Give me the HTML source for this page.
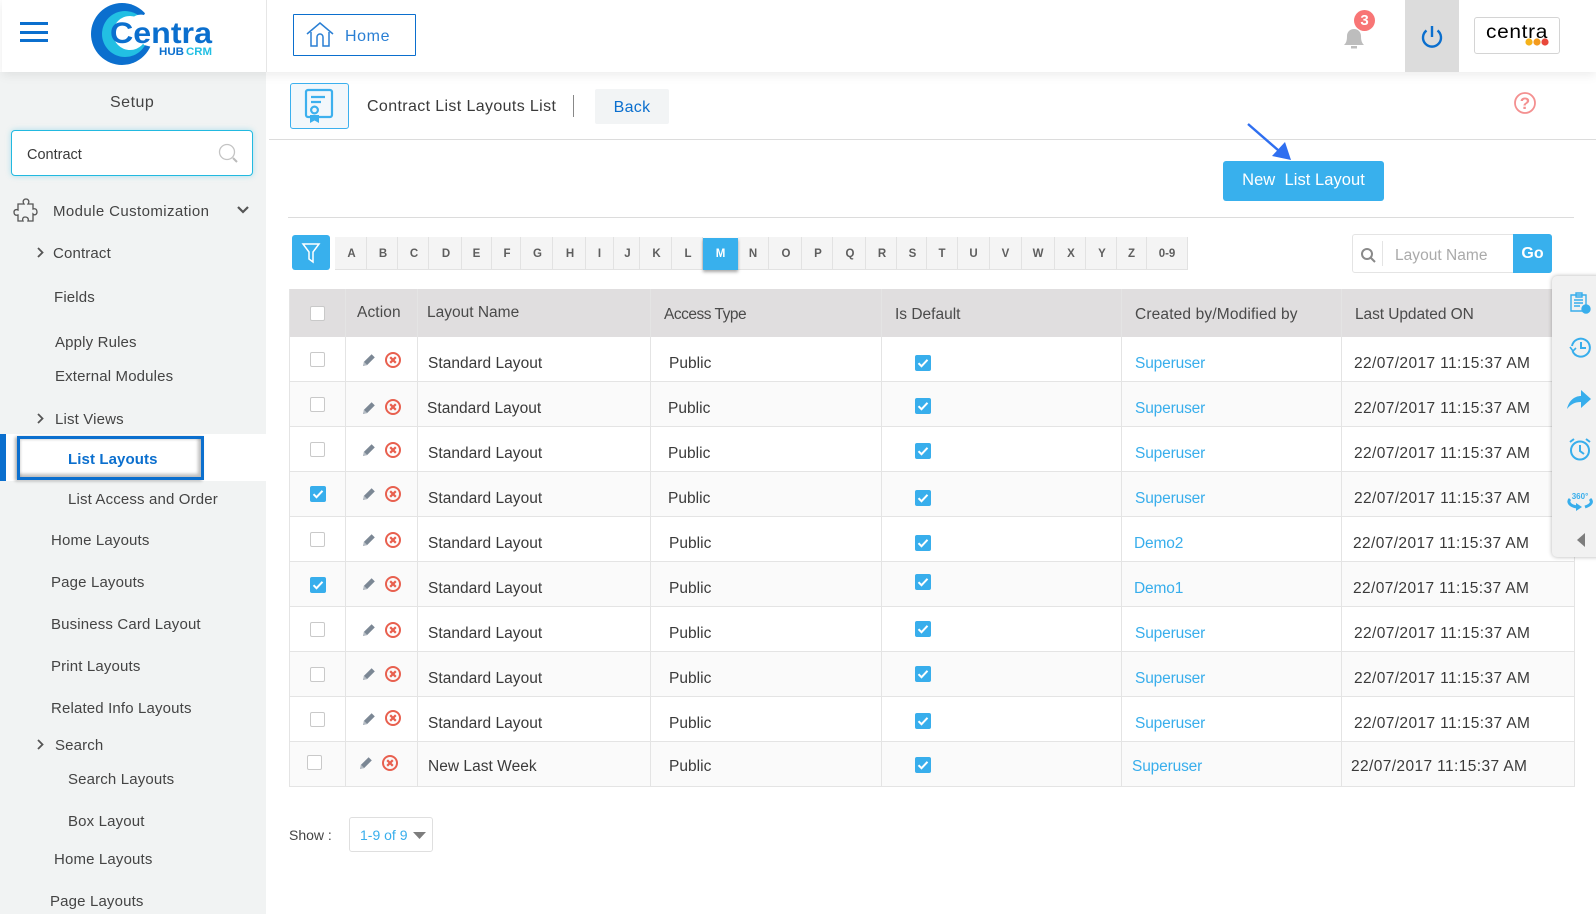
<!DOCTYPE html>
<html><head><meta charset="utf-8"><title>Contract List Layouts List</title>
<style>
html,body{margin:0;padding:0;background:#fff}
#p{position:relative;width:1596px;height:914px;overflow:hidden;background:#fff;font-family:"Liberation Sans",sans-serif;color:#3c3c3c}
#p div,#p span,#p svg{position:absolute}
.n,.t{white-space:nowrap;line-height:20px;height:20px}
.n{font-size:15px;letter-spacing:.15px;color:#444;margin-top:1px}
.t{font-size:15.5px;letter-spacing:.03px;color:#3a3a3a;margin-top:2px}
.d{letter-spacing:.39px}
.u{color:#38aeec;letter-spacing:-.15px}
.h{color:#4a4a4a;margin-top:1px}
.l{top:237px;height:33px;background:#f4f4f4;border-right:1px solid #e2e2e2;border-bottom:1px solid #e2e2e2;box-sizing:border-box;text-align:center;font-size:11.5px;font-weight:bold;line-height:35px;color:#5e5e5e}
.a{padding-left:2px}
.rl{left:289px;width:1286px;height:1px;background:#e4e4e4}
.vl{top:289px;width:1px;height:497px;background:#e4e4e4}
.cb{width:15px;height:15px;box-sizing:border-box;border:1px solid #c9c9c9;border-radius:2px;background:#fff}
</style></head><body><div id="p">
<svg width="0" height="0" style="left:0;top:0"><defs>
<symbol id="pen" viewBox="0 0 16 16"><path d="M2 14l1-4.2 7.6-7.6 3.2 3.2-7.6 7.6z" fill="#7b8794"/><path d="M2 14l1-4.2 3.2 3.2z" fill="#b5bcc4"/></symbol>
<symbol id="xc" viewBox="0 0 18 18"><circle cx="9" cy="9" r="7" fill="none" stroke="#e8604f" stroke-width="2"/><path d="M6.2 6.2l5.6 5.6M11.8 6.2l-5.6 5.6" stroke="#e8604f" stroke-width="2.2"/></symbol>
<symbol id="ck" viewBox="0 0 16 16"><rect width="16" height="16" rx="2" fill="#38aeec"/><path d="M3.5 8.2l3 3 6-6.4" fill="none" stroke="#fff" stroke-width="2"/></symbol>
</defs></svg>

<!-- sidebar -->
<div style="left:0;top:72px;width:266px;height:842px;background:#f1f3f3"></div>
<!-- header -->
<div style="left:2px;top:0;width:1594px;height:72px;background:#fff;box-shadow:0 3px 10px rgba(0,0,0,.08)"></div>
<div style="left:266px;top:0;width:1px;height:72px;background:#e6e6e6"></div>
<div style="left:20px;top:22px;width:28px;height:3px;background:#0b6fce"></div>
<div style="left:20px;top:31px;width:28px;height:3px;background:#0b6fce"></div>
<div style="left:20px;top:39px;width:28px;height:3px;background:#0b6fce"></div>

<svg style="left:80px;top:0" width="140" height="72" viewBox="0 0 140 72">
<circle cx="42" cy="34" r="31" fill="#0b6fce"/>
<circle cx="45" cy="34" r="23" fill="#22bfe3"/>
<circle cx="50" cy="33" r="17" fill="#fff"/>
<path d="M50 20C54 15 60 14 64 15 67 9 76 8 80 11 84 11 87 14 88 16L140 16 140 48 76 48 64 45Z" fill="#fff"/>
<text x="30" y="43" font-family="'Liberation Sans',sans-serif" font-weight="bold" font-size="30" fill="#0b6fce" textLength="102" lengthAdjust="spacingAndGlyphs">Centra</text>
<text x="79" y="55" font-family="'Liberation Sans',sans-serif" font-weight="bold" font-size="11" fill="#0b6fce" textLength="25" lengthAdjust="spacingAndGlyphs">HUB</text>
<text x="106" y="55" font-family="'Liberation Sans',sans-serif" font-weight="bold" font-size="11" fill="#22bfe3" textLength="26" lengthAdjust="spacingAndGlyphs">CRM</text>
</svg>

<div style="left:293px;top:14px;width:123px;height:42px;box-sizing:border-box;border:1px solid #0b6fce;border-radius:1px"></div>
<svg style="left:305px;top:21px" width="30" height="28" viewBox="0 0 30 28" fill="none" stroke="#2a7fd4" stroke-width="1.5"><path d="M2 13L15 2l13 11"/><path d="M6 11v14h6v-9a3 3 0 0 1 6 0v9h6V11"/></svg>
<span class="t" style="left:345px;top:26px;color:#2a7fd4;font-size:16px;letter-spacing:.6px;margin-top:1px">Home</span>

<!-- bell -->
<svg style="left:1340px;top:22px" width="28" height="28" viewBox="0 0 28 28"><path d="M4 23c2-2 3-4 3-9 0-4 3-7 7-7s7 3 7 7c0 5 1 7 3 9z" fill="#bdbdbd"/><rect x="11" y="24" width="6" height="2.5" fill="#bdbdbd"/></svg>
<div style="left:1354px;top:10px;width:21px;height:21px;border-radius:50%;background:#f87575;color:#fff;font-size:15px;font-weight:bold;line-height:21px;text-align:center">3</div>
<!-- power -->
<div style="left:1405px;top:0;width:54px;height:72px;background:#dcdcdc"></div>
<svg style="left:1420px;top:24px" width="24" height="24" viewBox="0 0 24 24" fill="none" stroke="#0b6fce" stroke-width="2.4"><path d="M6.5 6.5a9 9 0 1 0 11 0"/><path d="M12 2v11"/></svg>
<!-- centra badge -->
<div style="left:1474px;top:17px;width:86px;height:37px;box-sizing:border-box;border:1px solid #d4d4d4;border-radius:3px;background:#fff"></div>
<span style="left:1486px;top:23px;font-size:19px;line-height:20px;color:#000;letter-spacing:.6px;transform-origin:0 0;transform:scaleX(1.1)">centra</span>
<svg style="left:1525px;top:38px" width="26" height="8" viewBox="0 0 26 8"><circle cx="4" cy="4" r="3.6" fill="#f5b21a"/><circle cx="12" cy="4" r="3.6" fill="#f39a1e"/><circle cx="20" cy="4" r="3.6" fill="#e8483a"/></svg>

<!-- title -->
<div style="left:290px;top:83px;width:59px;height:46px;box-sizing:border-box;border:1px solid #3cb0ee;border-radius:3px;background:#f2f7fb"></div>
<svg style="left:304px;top:88px" width="32" height="38" viewBox="0 0 32 38" fill="none" stroke="#3cb0ee" stroke-width="2.2"><path d="M6 29H4a2 2 0 0 1-2-2V4a2 2 0 0 1 2-2h22a2 2 0 0 1 2 2v23a2 2 0 0 1-2 2H15"/><path d="M7 9h14M7 14h10"/><circle cx="10.500" cy="22" r="3.400"/><path d="M6 27v8l4.500-2.500L15 35v-8" fill="#3cb0ee" stroke="none"/></svg>
<span class="t" style="left:367px;top:95px;font-size:16px;letter-spacing:.37px">Contract List Layouts List</span>
<div style="left:573px;top:95px;width:1px;height:22px;background:#888"></div>
<div style="left:595px;top:89px;width:74px;height:35px;background:#f2f4f5;border-radius:2px;color:#0b6fce;font-size:16px;line-height:37px;text-align:center;letter-spacing:.3px">Back</div>
<svg style="left:1513px;top:91px" width="24" height="24" viewBox="0 0 24 24"><circle cx="12" cy="12" r="10" fill="none" stroke="#f49090" stroke-width="1.8"/><text x="12" y="18" text-anchor="middle" font-family="'Liberation Sans',sans-serif" font-weight="bold" font-size="17" fill="#f49090">?</text></svg>
<div style="left:269px;top:139px;width:1327px;height:1px;background:#dcdcdc"></div>
<div style="left:288px;top:217px;width:1286px;height:1px;background:#dcdcdc"></div>

<!-- new button -->
<div style="left:1223px;top:161px;width:161px;height:40px;background:#38b0ed;border-radius:3px;color:#fff;font-size:16.5px;line-height:38px;text-align:center;letter-spacing:.05px;white-space:pre">New  List Layout</div>
<svg style="left:1240px;top:118px" width="60" height="46" viewBox="0 0 60 46"><path d="M8 6l38 33" stroke="#2f6ff0" stroke-width="2.4"/><path d="M51 42l-6-18-13 14z" fill="#2f6ff0"/></svg>

<!-- filter -->
<div style="left:292px;top:235px;width:38px;height:35px;background:#38b0ed;border-radius:3px"></div>
<svg style="left:301px;top:242px" width="20" height="22" viewBox="0 0 20 22" fill="none" stroke="#fff" stroke-width="1.500"><path d="M2 2h16l-6 8v10l-4-3v-7z"/></svg>
<div class="l a" style="left:335px;width:32px">A</div>
<div class="l a" style="left:367px;width:31px">B</div>
<div class="l a" style="left:398px;width:31px">C</div>
<div class="l a" style="left:429px;width:33px">D</div>
<div class="l" style="left:462px;width:30px">E</div>
<div class="l a" style="left:492px;width:29px">F</div>
<div class="l a" style="left:521px;width:32px">G</div>
<div class="l a" style="left:553px;width:33px">H</div>
<div class="l" style="left:586px;width:28px">I</div>
<div class="l a" style="left:614px;width:26px">J</div>
<div class="l a" style="left:640px;width:32px">K</div>
<div class="l a" style="left:672px;width:31px">L</div>
<div class="l" style="left:738px;width:31px">N</div>
<div class="l a" style="left:769px;width:33px">O</div>
<div class="l a" style="left:802px;width:31px">P</div>
<div class="l a" style="left:833px;width:33px">Q</div>
<div class="l a" style="left:866px;width:31px">R</div>
<div class="l a" style="left:897px;width:30px">S</div>
<div class="l" style="left:927px;width:31px">T</div>
<div class="l" style="left:958px;width:32px">U</div>
<div class="l" style="left:990px;width:32px">V</div>
<div class="l" style="left:1022px;width:33px">W</div>
<div class="l a" style="left:1055px;width:31px">X</div>
<div class="l a" style="left:1086px;width:31px">Y</div>
<div class="l" style="left:1117px;width:30px">Z</div>
<div class="l" style="left:1147px;width:41px">0-9</div>
<div class="l" style="left:703px;top:238px;width:35px;height:32px;background:#38b0ed;color:#fff;border:0;line-height:32px;box-shadow:0 2px 3px rgba(0,0,0,.35)">M</div>

<!-- layout search -->
<div style="left:1352px;top:234px;width:200px;height:39px;box-sizing:border-box;border:1px solid #e4e4e4;border-radius:3px;background:#fff"></div>
<svg style="left:1360px;top:247px" width="16" height="16" viewBox="0 0 16 16" fill="none" stroke="#8a8a8a" stroke-width="2"><circle cx="7" cy="7" r="5"/><path d="M11 11l4 4"/></svg>
<div style="left:1382px;top:241px;width:1px;height:25px;background:#e4e4e4"></div>
<span class="t" style="left:1395px;top:245px;color:#aaa;font-size:15.5px;margin-top:1px">Layout Name</span>
<div style="left:1513px;top:234px;width:39px;height:39px;background:#38b0ed;border-radius:0 3px 3px 0;color:#fff;font-size:16px;font-weight:bold;line-height:39px;text-align:center">Go</div>

<!-- table -->
<div style="left:289px;top:289px;width:1286px;height:48px;background:#e0dedf"></div>
<div style="left:289px;top:382px;width:1286px;height:44px;background:#fafafa"></div>
<div style="left:289px;top:471px;width:1286px;height:45px;background:#fafafa"></div>
<div style="left:289px;top:561px;width:1286px;height:45px;background:#fafafa"></div>
<div style="left:289px;top:651px;width:1286px;height:45px;background:#fafafa"></div>
<div style="left:289px;top:741px;width:1286px;height:45px;background:#fafafa"></div>
<div class="rl" style="top:381px"></div><div class="rl" style="top:426px"></div><div class="rl" style="top:471px"></div><div class="rl" style="top:516px"></div><div class="rl" style="top:561px"></div><div class="rl" style="top:606px"></div><div class="rl" style="top:651px"></div><div class="rl" style="top:696px"></div><div class="rl" style="top:741px"></div><div class="rl" style="top:786px"></div>
<div class="vl" style="left:289px"></div><div class="vl" style="left:345px"></div><div class="vl" style="left:417px"></div><div class="vl" style="left:650px"></div><div class="vl" style="left:881px"></div><div class="vl" style="left:1121px"></div><div class="vl" style="left:1341px"></div><div class="vl" style="left:1574px"></div>

<div class="cb" style="left:310px;top:306px;border-radius:2px"></div>
<span class="t h" style="left:357px;top:302px;letter-spacing:.1px">Action</span>
<span class="t h" style="left:427px;top:302px;letter-spacing:0">Layout Name</span>
<span class="t h" style="left:664px;top:304px;letter-spacing:-.5px">Access Type</span>
<span class="t h" style="left:895px;top:304px;letter-spacing:0">Is Default</span>
<span class="t h" style="left:1135px;top:304px;letter-spacing:.15px">Created by/Modified by</span>
<span class="t h" style="left:1355px;top:304px;letter-spacing:-.07px">Last Updated ON</span>

<!-- row 1 -->
<div class="cb" style="left:310px;top:352px"></div>
<svg style="left:361px;top:352px" width="16" height="16"><use href="#pen"/></svg>
<svg style="left:384px;top:351px" width="18" height="18"><use href="#xc"/></svg>
<span class="t" style="left:428px;top:352px">Standard Layout</span>
<span class="t" style="left:669px;top:352px">Public</span>
<svg style="left:915px;top:355px" width="16" height="16"><use href="#ck"/></svg>
<span class="t u" style="left:1135px;top:352px">Superuser</span>
<span class="t d" style="left:1354px;top:352px">22/07/2017 11:15:37 AM</span>
<!-- row 2 -->
<div class="cb" style="left:310px;top:397px"></div>
<svg style="left:361px;top:400px" width="16" height="16"><use href="#pen"/></svg>
<svg style="left:384px;top:398px" width="18" height="18"><use href="#xc"/></svg>
<span class="t" style="left:427px;top:397px">Standard Layout</span>
<span class="t" style="left:668px;top:397px">Public</span>
<svg style="left:915px;top:398px" width="16" height="16"><use href="#ck"/></svg>
<span class="t u" style="left:1135px;top:397px">Superuser</span>
<span class="t d" style="left:1354px;top:397px">22/07/2017 11:15:37 AM</span>
<!-- row 3 -->
<div class="cb" style="left:310px;top:442px"></div>
<svg style="left:361px;top:442px" width="16" height="16"><use href="#pen"/></svg>
<svg style="left:384px;top:441px" width="18" height="18"><use href="#xc"/></svg>
<span class="t" style="left:428px;top:442px">Standard Layout</span>
<span class="t" style="left:668px;top:442px">Public</span>
<svg style="left:915px;top:443px" width="16" height="16"><use href="#ck"/></svg>
<span class="t u" style="left:1135px;top:442px">Superuser</span>
<span class="t d" style="left:1354px;top:442px">22/07/2017 11:15:37 AM</span>
<!-- row 4 -->
<svg style="left:310px;top:486px" width="16" height="16"><use href="#ck"/></svg>
<svg style="left:361px;top:486px" width="16" height="16"><use href="#pen"/></svg>
<svg style="left:384px;top:485px" width="18" height="18"><use href="#xc"/></svg>
<span class="t" style="left:428px;top:487px">Standard Layout</span>
<span class="t" style="left:668px;top:487px">Public</span>
<svg style="left:915px;top:490px" width="16" height="16"><use href="#ck"/></svg>
<span class="t u" style="left:1135px;top:487px">Superuser</span>
<span class="t d" style="left:1354px;top:487px">22/07/2017 11:15:37 AM</span>
<!-- row 5 -->
<div class="cb" style="left:310px;top:532px"></div>
<svg style="left:361px;top:532px" width="16" height="16"><use href="#pen"/></svg>
<svg style="left:384px;top:531px" width="18" height="18"><use href="#xc"/></svg>
<span class="t" style="left:428px;top:532px">Standard Layout</span>
<span class="t" style="left:669px;top:532px">Public</span>
<svg style="left:915px;top:535px" width="16" height="16"><use href="#ck"/></svg>
<span class="t u" style="left:1134px;top:532px">Demo2</span>
<span class="t d" style="left:1353px;top:532px">22/07/2017 11:15:37 AM</span>
<!-- row 6 -->
<svg style="left:310px;top:577px" width="16" height="16"><use href="#ck"/></svg>
<svg style="left:361px;top:576px" width="16" height="16"><use href="#pen"/></svg>
<svg style="left:384px;top:575px" width="18" height="18"><use href="#xc"/></svg>
<span class="t" style="left:428px;top:577px">Standard Layout</span>
<span class="t" style="left:669px;top:577px">Public</span>
<svg style="left:915px;top:574px" width="16" height="16"><use href="#ck"/></svg>
<span class="t u" style="left:1134px;top:577px">Demo1</span>
<span class="t d" style="left:1353px;top:577px">22/07/2017 11:15:37 AM</span>
<!-- row 7 -->
<div class="cb" style="left:310px;top:622px"></div>
<svg style="left:361px;top:622px" width="16" height="16"><use href="#pen"/></svg>
<svg style="left:384px;top:621px" width="18" height="18"><use href="#xc"/></svg>
<span class="t" style="left:428px;top:622px">Standard Layout</span>
<span class="t" style="left:669px;top:622px">Public</span>
<svg style="left:915px;top:621px" width="16" height="16"><use href="#ck"/></svg>
<span class="t u" style="left:1135px;top:622px">Superuser</span>
<span class="t d" style="left:1354px;top:622px">22/07/2017 11:15:37 AM</span>
<!-- row 8 -->
<div class="cb" style="left:310px;top:667px"></div>
<svg style="left:361px;top:666px" width="16" height="16"><use href="#pen"/></svg>
<svg style="left:384px;top:665px" width="18" height="18"><use href="#xc"/></svg>
<span class="t" style="left:428px;top:667px">Standard Layout</span>
<span class="t" style="left:669px;top:667px">Public</span>
<svg style="left:915px;top:666px" width="16" height="16"><use href="#ck"/></svg>
<span class="t u" style="left:1135px;top:667px">Superuser</span>
<span class="t d" style="left:1354px;top:667px">22/07/2017 11:15:37 AM</span>
<!-- row 9 -->
<div class="cb" style="left:310px;top:712px"></div>
<svg style="left:361px;top:711px" width="16" height="16"><use href="#pen"/></svg>
<svg style="left:384px;top:709px" width="18" height="18"><use href="#xc"/></svg>
<span class="t" style="left:428px;top:712px">Standard Layout</span>
<span class="t" style="left:669px;top:712px">Public</span>
<svg style="left:915px;top:713px" width="16" height="16"><use href="#ck"/></svg>
<span class="t u" style="left:1135px;top:712px">Superuser</span>
<span class="t d" style="left:1354px;top:712px">22/07/2017 11:15:37 AM</span>
<!-- row 10 -->
<div class="cb" style="left:307px;top:755px"></div>
<svg style="left:358px;top:755px" width="16" height="16"><use href="#pen"/></svg>
<svg style="left:381px;top:754px" width="18" height="18"><use href="#xc"/></svg>
<span class="t" style="left:428px;top:755px">New Last Week</span>
<span class="t" style="left:669px;top:755px">Public</span>
<svg style="left:915px;top:757px" width="16" height="16"><use href="#ck"/></svg>
<span class="t u" style="left:1132px;top:755px">Superuser</span>
<span class="t d" style="left:1351px;top:755px">22/07/2017 11:15:37 AM</span>

<!-- show -->
<span class="t" style="left:289px;top:825px;font-size:14px;letter-spacing:0;color:#444;margin-top:0">Show :</span>
<div style="left:349px;top:817px;width:84px;height:35px;box-sizing:border-box;border:1px solid #dfdfdf;border-radius:3px;background:#fff"></div>
<span class="t u" style="left:360px;top:825px;font-size:14px;letter-spacing:0;margin-top:0">1-9 of 9</span>
<svg style="left:413px;top:832px" width="13" height="7" viewBox="0 0 13 8" preserveAspectRatio="none"><path d="M0 0h13L6.500 8z" fill="#7d7d7d"/></svg>

<!-- right tool panel -->
<div style="left:1552px;top:276px;width:50px;height:281px;background:#f1f1f1;border-radius:5px;box-shadow:0 0 4px rgba(0,0,0,.3)"></div>
<svg style="left:1569px;top:292px" width="22" height="22" viewBox="0 0 22 22" fill="none" stroke="#38aeec" stroke-width="1.400"><path d="M4 3h13v16H2V3z"/><path d="M7 1h6v4H7zM5 8h9M5 11h9M5 14h6"/><circle cx="17" cy="17" r="4" fill="#38aeec"/></svg>
<svg style="left:1569px;top:337px" width="22" height="22" viewBox="0 0 22 22" fill="none" stroke="#38aeec" stroke-width="2"><path d="M3.500 14a9 9 0 1 0 -.5-5"/><path d="M1 10l3 4 3-3" stroke-width="1.600"/><path d="M12 5v6h5"/></svg>
<svg style="left:1566px;top:388px" width="26" height="22" viewBox="0 0 26 22"><path d="M1 21C3 12 9 8 15 8V2l10 9-10 9v-6C9 14 5 16 1 21z" fill="#38aeec"/></svg>
<svg style="left:1569px;top:437px" width="22" height="24" viewBox="0 0 22 24" fill="none" stroke="#38aeec" stroke-width="2"><circle cx="11" cy="13.500" r="9"/><path d="M11 8v6l4 3"/><path d="M1 5l4-3M21 5l-4-3"/></svg>
<svg style="left:1567px;top:490px" width="26" height="22" viewBox="0 0 26 22"><path d="M3 9c-3 3 0 7 7 8" fill="none" stroke="#38aeec" stroke-width="3"/><path d="M9 13l6 4-6 4z" fill="#38aeec"/><path d="M23 9c3 3 1 6-5 8" fill="none" stroke="#38aeec" stroke-width="3"/><text x="13" y="9" text-anchor="middle" font-family="'Liberation Sans',sans-serif" font-weight="bold" font-size="8" fill="#38aeec">360°</text></svg>
<svg style="left:1577px;top:533px" width="8" height="14" viewBox="0 0 8 14"><path d="M8 0v14L0 7z" fill="#7d7d7d"/></svg>

<!-- sidebar items -->
<span class="n" style="left:110px;top:91px;font-size:16px;letter-spacing:.5px;margin-top:2px">Setup</span>
<div style="left:11px;top:130px;width:242px;height:46px;box-sizing:border-box;border:1px solid #22b9e0;border-radius:4px;background:#fff;box-shadow:0 0 6px rgba(34,185,224,.35)"></div>
<span class="n" style="left:27px;top:144px;font-size:14.500px;letter-spacing:0;color:#3a3a3a">Contract</span>
<svg style="left:218px;top:143px" width="22" height="22" viewBox="0 0 22 22" fill="none"><circle cx="9" cy="9" r="7.500" stroke="#c4c4c4" stroke-width="1.300"/><path d="M15 15l4 4" stroke="#bbb" stroke-width="2"/></svg>
<svg style="left:12px;top:197px" width="26" height="26" viewBox="0 0 26 26" fill="none" stroke="#555" stroke-width="1.300"><path d="M8 7h4c-2-3 0-5 2-5s4 2 2 5h5v5c3-1 4 1 4 3s-2 4-4 2v7h-5c1-3-1-4-3-4s-3 2-2 4H6v-6c-3 1-4-1-4-3s2-3 4-2V7z"/></svg>
<span class="n" style="left:53px;top:201px;letter-spacing:.4px">Module Customization</span>
<svg style="left:237px;top:206px" width="12" height="8" viewBox="0 0 12 8" fill="none" stroke="#555" stroke-width="2.200"><path d="M1 1l5 5 5-5"/></svg>
<svg style="left:37px;top:247px" width="7" height="11" viewBox="0 0 7 11" fill="none" stroke="#555" stroke-width="1.800"><path d="M1 1l4.500 4.500L1 10"/></svg>
<span class="n" style="left:53px;top:243px">Contract</span>
<span class="n" style="left:54px;top:287px">Fields</span>
<span class="n" style="left:55px;top:332px">Apply Rules</span>
<span class="n" style="left:55px;top:366px">External Modules</span>
<svg style="left:37px;top:413px" width="7" height="11" viewBox="0 0 7 11" fill="none" stroke="#555" stroke-width="1.800"><path d="M1 1l4.500 4.500L1 10"/></svg>
<span class="n" style="left:55px;top:409px">List Views</span>
<div style="left:0;top:434px;width:6px;height:47px;background:#0b6fce"></div>
<div style="left:6px;top:434px;width:260px;height:47px;background:#fff"></div>
<div style="left:17px;top:436px;width:187px;height:44px;box-sizing:border-box;border:3px solid #0b6fce;background:#fff;box-shadow:inset -3px -3px 3px rgba(0,0,0,.25),inset 1px 1px 2px rgba(0,0,0,.15),-2px 1px 3px rgba(0,0,0,.3)"></div>
<span class="n" style="left:68px;top:449px;font-weight:bold;color:#0b6fce;letter-spacing:.1px">List Layouts</span>
<span class="n" style="left:68px;top:489px">List Access and Order</span>
<span class="n" style="left:51px;top:530px">Home Layouts</span>
<span class="n" style="left:51px;top:572px">Page Layouts</span>
<span class="n" style="left:51px;top:614px">Business Card Layout</span>
<span class="n" style="left:51px;top:656px">Print Layouts</span>
<span class="n" style="left:51px;top:698px">Related Info Layouts</span>
<svg style="left:37px;top:739px" width="7" height="11" viewBox="0 0 7 11" fill="none" stroke="#555" stroke-width="1.800"><path d="M1 1l4.500 4.500L1 10"/></svg>
<span class="n" style="left:55px;top:735px">Search</span>
<span class="n" style="left:68px;top:769px">Search Layouts</span>
<span class="n" style="left:68px;top:811px">Box Layout</span>
<span class="n" style="left:54px;top:849px">Home Layouts</span>
<span class="n" style="left:50px;top:891px">Page Layouts</span>
</div></body></html>
